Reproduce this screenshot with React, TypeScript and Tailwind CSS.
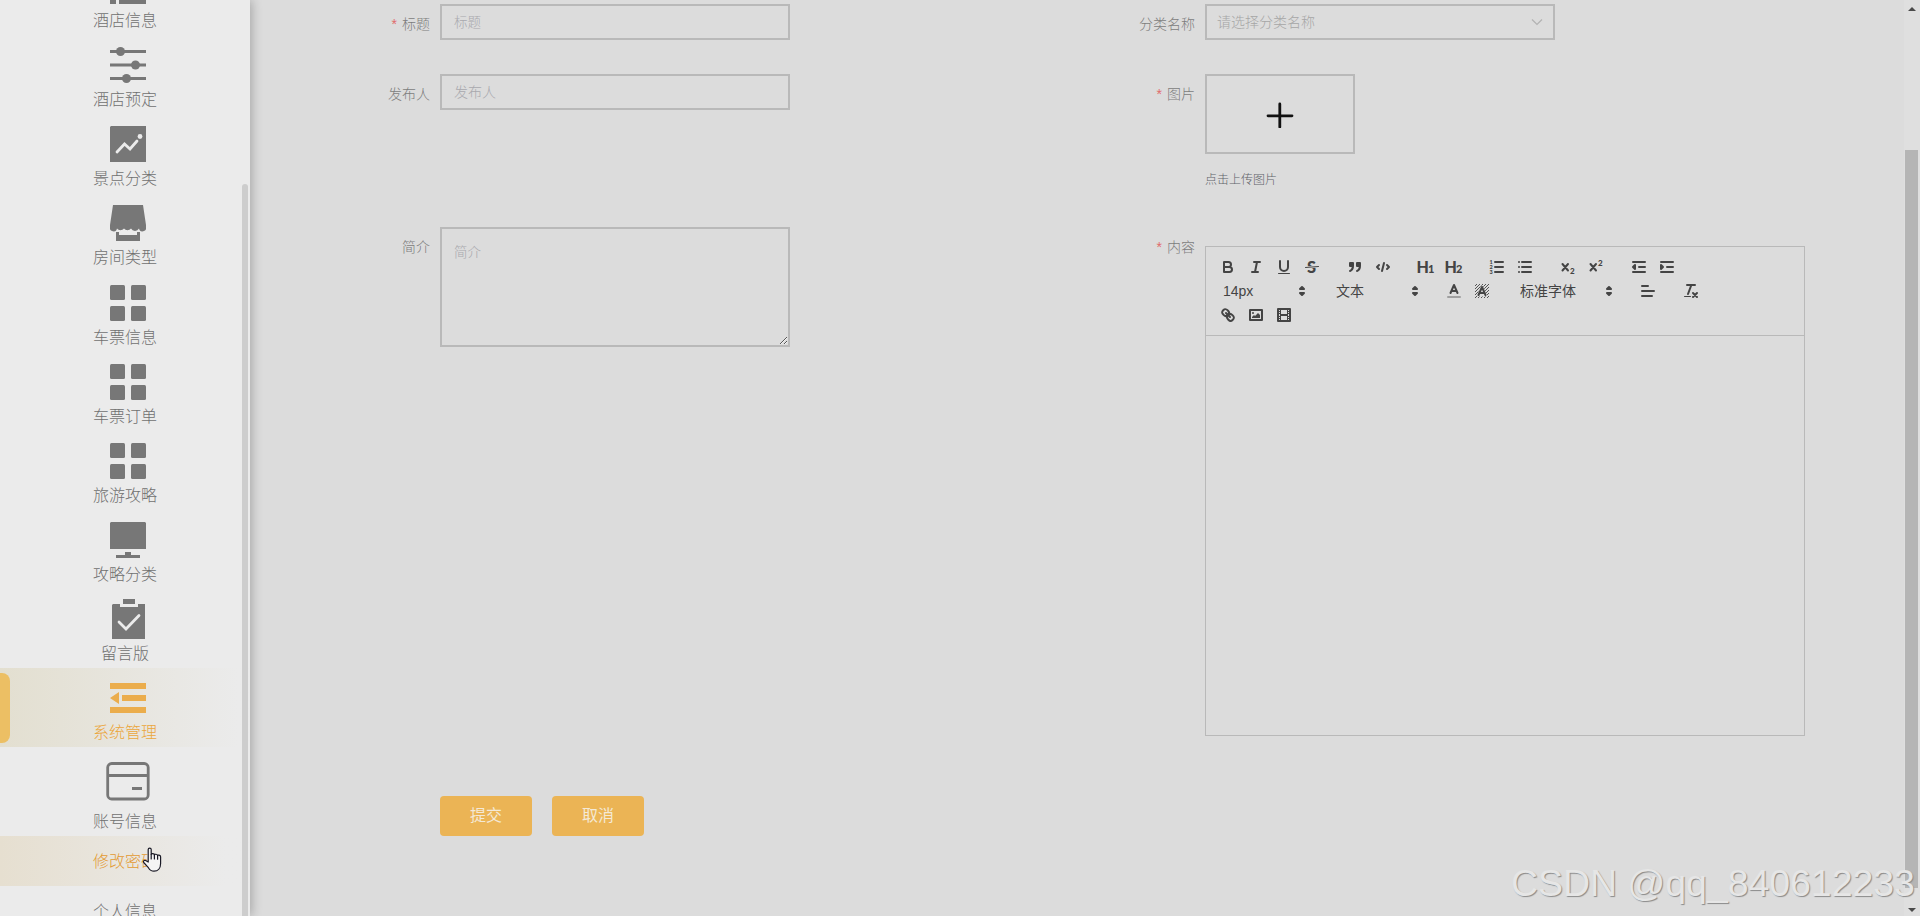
import React, { useState } from 'react';

interface MenuItem {
  label: string;
  icon: React.ReactNode;
}

// Sidebar icons
const ListIcon = () => (
  <svg width="36" height="36" viewBox="0 0 36 36" fill="currentColor">
    <path d="M0 0h6v7H0zM9 0h27v7H9zM0 14h6v8H0zM9 14h27v8H9zM0 29h6v7H0zM9 29h27v7H9z" />
  </svg>
);

const SlidersIcon = () => (
  <svg width="36" height="36" viewBox="0 0 36 36" fill="currentColor">
    <path d="M0 3h36v3H0zM0 16.500h36v3H0zM0 30h36v3H0z" />
    <circle cx="10.500" cy="4.500" r="4.500" />
    <circle cx="25.500" cy="18" r="4.500" />
    <circle cx="16.500" cy="31.500" r="4.500" />
  </svg>
);

const ChartIcon = () => (
  <svg width="36" height="36" viewBox="0 0 36 36" fill="none">
    <path d="M1 0h35v36H0V1z" fill="currentColor" />
    <path d="M7 26l7.500-8 5.500 5 7-8" stroke="#ebebeb" strokeWidth="2.800" strokeLinecap="round" />
    <circle cx="30" cy="10.500" r="2.400" fill="#ebebeb" />
  </svg>
);

const ShopIcon = () => (
  <svg width="36" height="36" viewBox="0 0 36 36" fill="currentColor">
    <path d="M3 0h30l3 20v2a3.500 3.500 0 0 1-7 1.500 4.500 4.500 0 0 1-8 0 4.500 4.500 0 0 1-7 0 4.500 4.500 0 0 1-7 0A3.500 3.500 0 0 1 0 22v-2z" />
    <path d="M6 27h3v3h18v-3h3v9H6z" />
  </svg>
);

const GridIcon = () => (
  <svg width="36" height="36" viewBox="0 0 36 36" fill="currentColor">
    <rect width="15" height="15" rx="1.500" />
    <rect x="21" width="15" height="15" rx="1.500" />
    <rect y="21" width="15" height="15" rx="1.500" />
    <rect x="21" y="21" width="15" height="15" rx="1.500" />
  </svg>
);

const MonitorIcon = () => (
  <svg width="36" height="36" viewBox="0 0 36 36" fill="currentColor">
    <path d="M1 0h34l1 1v26H0V1zM15 30h6v3h9v3H6v-3h9z" />
  </svg>
);

const ClipboardIcon = () => (
  <svg width="34" height="40" viewBox="0 0 34 40" fill="none" className="ml-px">
    <path d="M11 0h12v5H11zM1 5h7v3h18V5h7v35H0V6z" fill="currentColor" />
    <path d="M7 23l7 7 13-13.500" stroke="#ebebeb" strokeWidth="2.800" strokeLinecap="round" />
  </svg>
);

const FoldIcon = () => (
  <svg width="36" height="30" viewBox="0 0 36 30" fill="currentColor">
    <path d="M0 0h36v6H0zM12 12h24v6H12zM0 24h36v6H0zM9 9v12l-9-6z" />
  </svg>
);

const CardIcon = () => (
  <svg width="44" height="39" viewBox="0 0 44 39" fill="none" stroke="currentColor" strokeWidth="2.800">
    <rect x="1.700" y="1.500" width="40.500" height="35.500" rx="4" />
    <path d="M2 13.500h40M26 26.500h10" />
  </svg>
);

const menuItems: MenuItem[] = [
  { label: '酒店信息', icon: <ListIcon /> },
  { label: '酒店预定', icon: <SlidersIcon /> },
  { label: '景点分类', icon: <ChartIcon /> },
  { label: '房间类型', icon: <ShopIcon /> },
  { label: '车票信息', icon: <GridIcon /> },
  { label: '车票订单', icon: <GridIcon /> },
  { label: '旅游攻略', icon: <GridIcon /> },
  { label: '攻略分类', icon: <MonitorIcon /> },
  { label: '留言版', icon: <ClipboardIcon /> },
];

const Sidebar: React.FC = () => (
  <aside className="relative z-10 h-[916px] w-[250px] shrink-0 overflow-hidden bg-[#ebebeb] text-base font-light text-[#707070] shadow-[2px_0_10px_rgba(0,0,0,0.24)]">
    <nav className="-mt-[44px]">
      {menuItems.map((item) => (
        <div key={item.label} className="flex h-[79.140px] flex-col items-center pt-[10px]">
          <div className="ml-[6px] flex h-10 items-center justify-center text-[#777]">{item.icon}</div>
          <span className="mt-[3px] leading-6">{item.label}</span>
        </div>
      ))}
      <div className="relative flex h-[79px] flex-col items-center bg-linear-to-r from-[#e3dfd0] to-[#ebebeb] to-95% pt-[10px] text-[#eba63c]">
        <span className="absolute top-[5px] left-0 h-[70px] w-[10px] rounded-r-lg bg-[#ecbf64]" />
        <div className="ml-[6px] flex h-10 items-center justify-center text-[#ebad4c]">
          <FoldIcon />
        </div>
        <span className="mt-[3px] leading-6">系统管理</span>
      </div>
      <div className="flex h-[89px] flex-col items-center pt-[15px]">
        <div className="ml-[6px] text-[#777]">
          <CardIcon />
        </div>
        <span className="mt-[9px] leading-6">账号信息</span>
      </div>
      <div className="flex h-[50px] items-center justify-center bg-linear-to-r from-[#e6dfd0] to-[#ebebeb] to-90% pt-px text-[#e39a32]">
        修改密码
      </div>
      <div className="flex h-[50px] items-center justify-center pt-px">个人信息</div>
    </nav>
    <span className="absolute top-[184px] right-[2px] h-[740px] w-[6px] rounded-t-sm bg-[#cdcdcd]" />
  </aside>
);

interface FieldProps {
  label: string;
  required?: boolean;
  children: React.ReactNode;
}

const Field: React.FC<FieldProps> = ({ label, required, children }) => (
  <div className="flex items-start">
    <label className="w-[150px] shrink-0 pr-[10px] text-right text-sm leading-10 font-light text-[#7c7c7c]">
      {required && <span className="mr-[5px] text-[#e06c6c]">*</span>}
      {label}
    </label>
    {children}
  </div>
);

// Toolbar icons, drawn on an 18x18 grid
const ToolButton: React.FC<{ children: React.ReactNode }> = ({ children }) => (
  <button type="button" className="h-6 w-7 px-[5px] py-[3px]">
    <svg
      width="18"
      height="18"
      viewBox="0 0 18 18"
      fill="none"
      stroke="#444"
      strokeWidth="2"
      strokeLinecap="round"
      strokeLinejoin="round"
    >
      {children}
    </svg>
  </button>
);

const Glyph: React.FC<{ x: number; y: number; size: number; children: string }> = ({ x, y, size, children }) => (
  <text x={x} y={y} fontSize={size} fill="#444" stroke="none" className="font-['Lato'] font-black">
    {children}
  </text>
);

const Picker: React.FC<{ label: string; width: string }> = ({ label, width }) => (
  <div className={`flex h-6 items-center justify-between pr-px pl-[9px] text-sm text-[#444] ${width}`}>
    <span>{label}</span>
    <svg width="18" height="18" viewBox="0 0 18 18" fill="#444" stroke="#444" strokeWidth="2" strokeLinejoin="round">
      <path d="M7 11l2 2 2-2zM7 7l2-2 2 2z" />
    </svg>
  </div>
);

const Toolbar: React.FC = () => (
  <div className="flex h-[90px] flex-col border border-[#b9b9b9] p-2">
    <div className="flex gap-[15px]">
      <div className="flex">
        <ToolButton>
          <path d="M5 4h4.500a2.500 2.500 0 0 1 0 5H5zM5 9h5.500a2.500 2.500 0 0 1 0 5H5z" />
        </ToolButton>
        <ToolButton>
          <path d="M7 4h6M5 14h6M8 14l2-10" />
        </ToolButton>
        <ToolButton>
          <path d="M5 3v6a4 4 0 0 0 8 0V3" />
          <rect x="3" y="15" width="12" height="1" rx="0.500" fill="#444" stroke="none" />
        </ToolButton>
        <ToolButton>
          <Glyph x={4} y={15} size={16.5}>S</Glyph>
          <path d="M2.500 9.500l13-1" stroke="#dcdcdc" strokeWidth="2.200" />
          <path d="M2.500 9.500l13-1" strokeWidth="1" />
        </ToolButton>
      </div>
      <div className="flex">
        <ToolButton>
          <path d="M4 5h3v3H4zM11 5h3v3h-3zM7 8c0 4-3 5-3 5M14 8c0 4-3 5-3 5" fill="#444" />
        </ToolButton>
        <ToolButton>
          <path d="M5 7L3 9l2 2M13 7l2 2-2 2M10 5l-2 8" />
        </ToolButton>
      </div>
      <div className="flex">
        <ToolButton>
          <Glyph x={-0.5} y={15} size={16}>H</Glyph>
          <Glyph x={11} y={15} size={11}>1</Glyph>
        </ToolButton>
        <ToolButton>
          <Glyph x={-0.5} y={15} size={16}>H</Glyph>
          <Glyph x={11} y={15} size={11}>2</Glyph>
        </ToolButton>
      </div>
      <div className="flex">
        <ToolButton>
          <path d="M7 4h8M7 9h8M7 14h8" />
          <Glyph x={1.5} y={6} size={5.5}>1</Glyph>
          <Glyph x={1.5} y={11} size={5.5}>2</Glyph>
          <Glyph x={1.5} y={16} size={5.5}>3</Glyph>
        </ToolButton>
        <ToolButton>
          <path d="M6 4h9M6 9h9M6 14h9M3 4h0M3 9h0M3 14h0" />
        </ToolButton>
      </div>
      <div className="flex">
        <ToolButton>
          <path d="M3.500 6l5.500 6.500M9 6l-5.500 6.500" />
          <Glyph x={11} y={16} size={8}>2</Glyph>
        </ToolButton>
        <ToolButton>
          <path d="M3.500 6l5.500 6.500M9 6l-5.500 6.500" />
          <Glyph x={11} y={8} size={8}>2</Glyph>
        </ToolButton>
      </div>
      <div className="flex">
        <ToolButton>
          <path d="M3 14h12M3 4h12M9 9h6" />
          <path d="M5 7v4L3 9z" fill="#444" />
        </ToolButton>
        <ToolButton>
          <path d="M3 14h12M3 4h12M9 9h6" />
          <path d="M3 7v4l2-2z" fill="#444" />
        </ToolButton>
      </div>
    </div>
    <div className="flex gap-[15px]">
      <Picker label="14px" width="w-[98px]" />
      <Picker label="文本" width="w-[98px]" />
      <div className="flex">
        <ToolButton>
          <path d="M3 15h12" opacity="0.400" />
          <path d="M5.500 11L9 3l3.500 8M11.600 9H6.400" />
        </ToolButton>
        <ToolButton>
          <defs>
            <pattern id="hatch" width="3" height="3" patternUnits="userSpaceOnUse">
              <path d="M0 3L3 0M-1 1L1-1M2 4L4 2" stroke="#444" strokeWidth="0.900" />
            </pattern>
          </defs>
          <rect x="2" y="2" width="14" height="14" fill="url(#hatch)" stroke="none" />
          <path d="M5.500 13L9 5l3.500 8z" stroke="#dcdcdc" strokeWidth="3" fill="#dcdcdc" />
          <path d="M5.500 13L9 5l3.500 8M11.600 11H6.400" />
        </ToolButton>
      </div>
      <Picker label="标准字体" width="w-[108px]" />
      <ToolButton>
        <path d="M3 9h12M3 14h10M3 4h6" />
      </ToolButton>
      <ToolButton>
        <path d="M5 3h8M6 12L9.350 3M11 11l4 4M15 11l-4 4" />
        <rect x="2" y="14" width="7" height="1" rx="0.500" fill="#444" stroke="none" />
      </ToolButton>
    </div>
    <div className="flex">
      <ToolButton>
        <path d="M7 7l4 4" />
        <path d="M8.900 4.577a3.476 3.476 0 0 1 .36 4.679A3.476 3.476 0 0 1 4.577 8.900C3.185 7.500 2.035 6.400 4.217 4.217S7.500 3.185 8.900 4.577Z" />
        <path d="M13.423 9.100a3.476 3.476 0 0 0-4.679-.36 3.476 3.476 0 0 0 .36 4.679c1.392 1.392 2.500 2.542 4.679.36S14.815 10.500 13.423 9.100Z" />
      </ToolButton>
      <ToolButton>
        <rect x="3" y="4" width="12" height="10" />
        <circle cx="6" cy="7" r="1" fill="#444" stroke="none" />
        <path d="M5 12v-1l2-2 1 1 3-3 2 2v3z" fill="#444" stroke="none" />
      </ToolButton>
      <ToolButton>
        <rect x="3" y="3" width="12" height="12" />
        <path d="M5 3h1v12H5zM12 3h1v12h-1zM5 8h8v2H5zM3 5h3v1H3zM3 7h3v1H3zM3 10h3v1H3zM3 12h3v1H3zM12 5h3v1h-3zM12 7h3v1h-3zM12 10h3v1h-3zM12 12h3v1h-3z" fill="#444" stroke="none" />
      </ToolButton>
    </div>
  </div>
);

const NewsForm: React.FC = () => {
  const [title, setTitle] = useState('');
  const [author, setAuthor] = useState('');
  const [intro, setIntro] = useState('');

  return (
    <form className="w-[1654px] pl-10">
      <div className="grid grid-cols-[765px_1fr]">
        <div className="h-[70px] pt-1">
          <Field label="标题" required>
            <input
              value={title}
              onChange={(e) => setTitle(e.target.value)}
              placeholder="标题"
              className="h-9 w-[350px] border-2 border-[#b9b9b9] px-3 text-[13.500px] font-light placeholder:text-[#a9a9ae]"
            />
          </Field>
        </div>
        <div className="h-[70px] pt-1">
          <Field label="分类名称">
            <div className="flex h-9 w-[350px] items-center justify-between border-2 border-[#b9b9b9] pr-[10px] pl-[10px] text-sm font-light text-[#a6a6a6]">
              <span>请选择分类名称</span>
              <svg width="12" height="12" viewBox="0 0 12 12" fill="none" stroke="#b2b2b2" strokeWidth="1.200">
                <path d="M1 3.500l5 5 5-5" />
              </svg>
            </div>
          </Field>
        </div>
        <div className="h-[153px] pt-1">
          <Field label="发布人">
            <input
              value={author}
              onChange={(e) => setAuthor(e.target.value)}
              placeholder="发布人"
              className="h-9 w-[350px] border-2 border-[#b9b9b9] px-3 text-sm font-light placeholder:text-[#a9a9ae]"
            />
          </Field>
        </div>
        <div className="h-[153px] pt-1">
          <Field label="图片" required>
            <div>
              <div className="flex h-20 w-[150px] items-center justify-center border-2 border-[#b9b9b9]">
                <svg width="28" height="28" viewBox="0 0 28 28" stroke="#111" strokeWidth="2.800" strokeLinecap="round">
                  <path d="M13.800 4v23M2 15.800h24" />
                </svg>
              </div>
              <p className="mt-[18px] text-xs leading-4 font-light text-[#5f6369]">点击上传图片</p>
            </div>
          </Field>
        </div>
        <div className="h-[569px] pt-1">
          <Field label="简介">
            <textarea
              value={intro}
              onChange={(e) => setIntro(e.target.value)}
              placeholder="简介"
              className="h-[120px] w-[350px] border-2 border-[#b9b9b9] px-3 pt-[14px] text-[13.500px] font-light placeholder:text-[#a9a9ae]"
            />
          </Field>
        </div>
        <div className="h-[569px] pt-1">
          <Field label="内容" required>
            <div className="mt-[19px] w-[600px]">
              <Toolbar />
              <div className="h-[400px] border border-t-0 border-[#b9b9b9]" />
            </div>
          </Field>
        </div>
      </div>
      <div className="mt-1 flex gap-5 pl-[150px] text-base text-[#f4e9d6]">
        <button type="button" className="h-10 w-[92px] rounded bg-[#ebb455]">提交</button>
        <button type="button" className="h-10 w-[92px] rounded bg-[#ebb455]">取消</button>
      </div>
    </form>
  );
};

const Scrollbar: React.FC = () => (
  <div className="flex h-full w-4 shrink-0 flex-col items-center bg-[#dfdfdf]">
    <svg width="8" height="4" viewBox="0 0 8 4" fill="#4a4a4a" className="mt-[7px] ml-[-1px] shrink-0">
      <path d="M4 0l4 4H0z" />
    </svg>
    <div className="mt-[139px] ml-[-1px] h-[738px] w-[13px] shrink-0 bg-[#b5b5b5]" />
    <svg width="8" height="4" viewBox="0 0 8 4" fill="#4a4a4a" className="mt-5 ml-[-1px] shrink-0">
      <path d="M0 0h8L4 4z" />
    </svg>
  </div>
);

const App: React.FC = () => (
  <div className="relative flex h-[916px] w-[1920px] overflow-hidden bg-[#dcdcdc] font-['Liberation_Sans','Noto_Sans_CJK_SC',sans-serif]">
    <Sidebar />
    <NewsForm />
    <Scrollbar />
    {/* Hand pointer */}
    <svg
      width="20"
      height="26"
      viewBox="0 0 20 26"
      className="absolute top-[847px] left-[142px] z-20"
      fill="#f4f4f4"
      stroke="#1a1a26"
      strokeWidth="1.200"
      strokeLinejoin="round"
      strokeLinecap="round"
    >
      <path d="M6.200 15V2.600a1.500 1.500 0 0 1 3 0V7.500c0-1.200 3.200-1.200 3.200.5 0-1.200 3.200-1 3.200.8 0-1.200 3-1 3 1V16.500c0 4.500-2.600 7.700-6.600 7.700-3 0-4.300-1.300-5.600-3.500L1.700 15.500c-.8-1.500.6-2.700 1.900-2z" />
      <path d="M9.200 7.500v4.500M12.400 8v4M15.600 8.800v3.400" />
    </svg>
    <div className="pointer-events-none absolute top-[862px] left-[1511px] z-20 font-['Liberation_Sans'] text-[37.400px] leading-[42px] whitespace-nowrap text-[#e6e6e6] [text-shadow:1px_1px_1px_#8a8a8a]">
      CSDN @qq_840612233
    </div>
  </div>
);

export default App;
